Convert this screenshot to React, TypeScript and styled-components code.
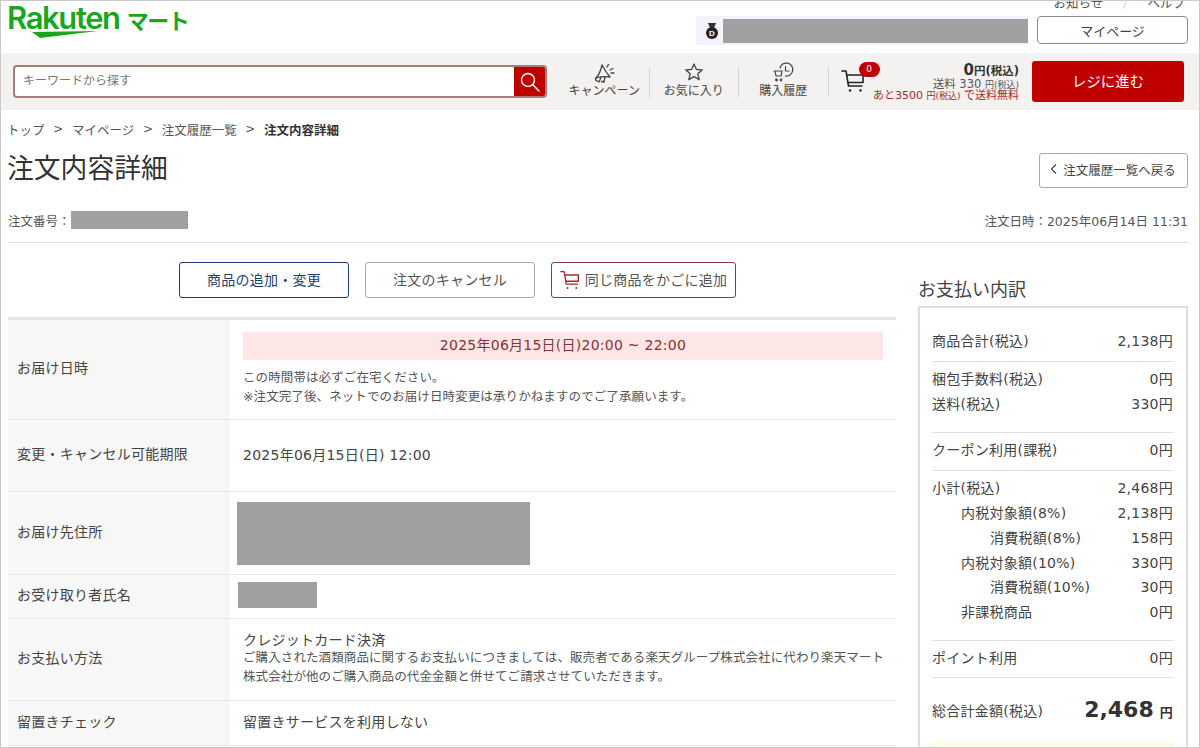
import React from "react";
import styled, { createGlobalStyle } from "styled-components";

const GlobalStyle = createGlobalStyle`
	html, body {
		margin: 0;
		padding: 0;
		background: #ffffff;
	}
	* {
		box-sizing: border-box;
	}
`;

const Frame = styled.div`
	width: 1200px;
	height: 748px;
	border: 1px solid #c9c9c9;
	overflow: hidden;
	background: #ffffff;
	color: #333333;
	font-family: "DejaVu Sans", "Noto Sans CJK JP", sans-serif;
	font-size: 14px;
`;

const TopBar = styled.header`
	height: 52px;
	display: flex;
	justify-content: space-between;
	padding-left: 6px;
	overflow: hidden;
`;

const Logo = styled.div`
	position: relative;
	display: flex;
	align-items: baseline;
	height: 36px;
	color: #1ba61f;
	line-height: 33px;
`;

const LogoWord = styled.span`
	font-family: "Inter", sans-serif;
	font-size: 31px;
	font-weight: 600;
	letter-spacing: -1.4px;
`;

const LogoKana = styled.span`
	font-family: "Noto Sans CJK JP", sans-serif;
	font-size: 22px;
	font-weight: 700;
	margin-left: 7px;
	letter-spacing: -1.5px;
`;

const LogoSwoosh = styled.svg`
	position: absolute;
	left: 25px;
	top: 30px;
`;

const UserArea = styled.div`
	display: flex;
	flex-direction: column;
	align-items: flex-end;
	padding-right: 11px;
	margin-top: -8px;
`;

const TopLinks = styled.div`
	display: flex;
	align-items: center;
	height: 23px;
	padding: 0 3px 5px 0;
	font-size: 12.5px;
	color: #555555;
	gap: 20px;
`;

const LinkSlash = styled.span`
	color: #d8d8d8;
`;

const UserRow = styled.div`
	display: flex;
	align-items: flex-start;
`;

const UserStrip = styled.div`
	display: flex;
	align-items: center;
	width: 332px;
	height: 29px;
	background: #f6f2fb;
	padding-left: 9px;
	gap: 4px;
	margin-right: 9px;
`;

const Redacted = styled.div<{ $w: number; $h: number; $ml?: number; $mt?: number }>`
	width: ${(p) => p.$w}px;
	height: ${(p) => p.$h}px;
	margin-left: ${(p) => p.$ml || 0}px;
	margin-top: ${(p) => p.$mt || 0}px;
	background: #a0a0a0;
	flex: none;
`;

const MyPageButton = styled.div`
	width: 151px;
	height: 28px;
	border: 1px solid #8c8c8c;
	border-radius: 4px;
	display: flex;
	align-items: center;
	justify-content: center;
	font-size: 13px;
	color: #444444;
`;

const ToolBar = styled.div`
	height: 57px;
	background: #f4f2f0;
	display: flex;
	align-items: center;
	padding-left: 12px;
	padding-right: 15px;
`;

const SearchBox = styled.div`
	width: 534px;
	height: 33px;
	display: flex;
	border: 2px solid #a87c7c;
	border-radius: 4px;
	background: #ffffff;
	overflow: hidden;
`;

const SearchInput = styled.div`
	flex: 1;
	padding-left: 8px;
	font-size: 12px;
	line-height: 28px;
	color: #777777;
`;

const SearchButton = styled.div`
	width: 31px;
	background: #bf0000;
	display: flex;
	align-items: center;
	justify-content: center;
`;

const NavList = styled.nav`
	display: flex;
	margin-left: 13px;
`;

const NavItem = styled.div`
	width: 89.5px;
	height: 30px;
	position: relative;
	display: flex;
	flex-direction: column;
	align-items: center;
	justify-content: flex-end;
	border-right: 1px solid #d5d3d1;
	font-size: 12px;
	line-height: 11px;
	color: #444444;
	white-space: nowrap;
`;

const NavIcon = styled.svg`
	position: absolute;
	left: 50%;
	top: -5px;
	transform: translateX(-50%);
`;

const CartArea = styled.div`
	position: relative;
	flex: 1;
	display: flex;
	justify-content: flex-end;
	padding-right: 13px;
	height: 100%;
	align-items: center;
`;

const CartIcon = styled.div`
	position: absolute;
	left: 12px;
	top: 16px;
	line-height: 0;
`;

const CartBadge = styled.div`
	position: absolute;
	left: 30px;
	top: 9px;
	width: 21px;
	height: 15px;
	border-radius: 8px;
	background: #bf0000;
	color: #ffffff;
	font-size: 9px;
	line-height: 15px;
	text-align: center;
`;

const CartSummary = styled.div`
	display: flex;
	flex-direction: column;
	align-items: flex-end;
	white-space: nowrap;
	font-size: 11.5px;
	line-height: 12px;
	margin-top: 2px;
	color: #555555;
`;

const CartTotal = styled.div`
	font-weight: 700;
	font-size: 11.5px;
	line-height: 14px;
	color: #333333;
`;

const CartTotalNum = styled.span`
	font-size: 15px;
`;

const Tiny = styled.span`
	font-size: 9px;
`;

const FreeShip = styled.div`
	color: #a52a2a;
	font-size: 11px;
	margin-top: -1px;
`;

const CheckoutButton = styled.div`
	width: 152px;
	height: 41px;
	padding-bottom: 3px;
	background: #bf0000;
	border-radius: 3px;
	color: #ffffff;
	display: flex;
	align-items: center;
	justify-content: center;
	font-size: 14.4px;
`;

const Content = styled.main`
	padding: 0 11px 0 7px;
	letter-spacing: 0.25px;
`;

const Breadcrumb = styled.div`
	display: flex;
	align-items: center;
	height: 40px;
	margin-left: -1px;
	padding-bottom: 2px;
	font-size: 12.5px;
	letter-spacing: 0;
	color: #555555;
	gap: 8.7px;
`;

const CrumbArrow = styled.span`
	font-size: 12px;
`;

const Current = styled.span`
	font-weight: 700;
	color: #333333;
`;

const TitleRow = styled.div`
	display: flex;
	justify-content: space-between;
	align-items: center;
	height: 35px;
	margin-top: 3px;
`;

const Title = styled.h1`
	margin: 0 0 0 -1px;
	padding-bottom: 3px;
	font-size: 26.8px;
	font-weight: 400;
	line-height: 36px;
	letter-spacing: 0;
	color: #333333;
`;

const BackButton = styled.div`
	width: 149px;
	height: 35px;
	padding: 0 2px 3px 0;
	border: 1px solid #aaaaaa;
	border-radius: 3px;
	display: flex;
	align-items: center;
	justify-content: center;
	gap: 4px;
	font-size: 12.5px;
	letter-spacing: 0;
	color: #444444;
`;

const OrderRow = styled.div`
	display: flex;
	justify-content: space-between;
	align-items: center;
	height: 55px;
	padding-top: 10px;
	border-bottom: 1px solid #dddddd;
	font-size: 12.5px;
	letter-spacing: 0;
	color: #555555;
`;

const OrderNo = styled.div`
	display: flex;
	align-items: center;
`;

const Columns = styled.div`
	display: grid;
	grid-template-columns: 888px 270px;
	column-gap: 22px;
`;

const Actions = styled.div`
	display: flex;
	gap: 16px;
	padding: 19px 0 19px 171px;
`;

const ActionButton = styled.div<{ $color: string; $text: string; $w: number }>`
	width: ${(p) => p.$w}px;
	height: 36px;
	padding-bottom: 3px;
	border: 1px solid ${(p) => p.$color};
	border-radius: 3px;
	display: flex;
	align-items: center;
	justify-content: center;
	gap: 5px;
	font-size: 14px;
	color: ${(p) => p.$text};
`;

const ActionIcon = styled.span`
	line-height: 0;
	margin-top: 3px;
`;

const Table = styled.div`
	border-top: 3px solid #e6e6e6;
`;

const Row = styled.div<{ $h: number }>`
	display: grid;
	grid-template-columns: 222px 1fr;
	min-height: ${(p) => p.$h}px;
	border-bottom: 1px solid #e8e8e8;
`;

const Label = styled.div`
	background: #f7f7f7;
	padding: 0 0 5px 9px;
	display: flex;
	align-items: center;
	color: #444444;
`;

const Value = styled.div<{ $top?: boolean }>`
	padding: ${(p) => (p.$top ? "12px 13px 0" : "0 13px 4px")};
	display: flex;
	flex-direction: column;
	justify-content: ${(p) => (p.$top ? "flex-start" : "center")};
	color: #444444;
`;

const DeliveryBanner = styled.div`
	height: 28px;
	background: #fde6e6;
	color: #8c3030;
	line-height: 27px;
	text-align: center;
	margin-bottom: 9px;
`;

const Note = styled.div`
	font-size: 12.5px;
	line-height: 18.5px;
	letter-spacing: 0.1px;
	white-space: nowrap;
	color: #555555;
`;

const Side = styled.aside`
	padding-top: 35px;
`;

const SideTitle = styled.h2`
	margin: 0 0 4px;
	font-size: 18px;
	font-weight: 400;
	line-height: 24px;
	letter-spacing: 0;
	color: #444444;
`;

const SideBox = styled.div`
	height: 500px;
	border: 2px solid #dddddd;
	border-bottom: none;
	padding: 21px 12px 0;
`;

const Group = styled.div<{ $pb: number; $first?: boolean }>`
	padding-top: ${(p) => (p.$first ? 0 : 5)}px;
	padding-bottom: ${(p) => p.$pb}px;
	border-bottom: 1px solid #e2e2e2;
`;

const SideRow = styled.div<{ $indent?: number }>`
	display: flex;
	justify-content: space-between;
	line-height: 24.8px;
	padding-left: ${(p) => p.$indent || 0}px;
	padding-right: 1px;
	color: #444444;
	white-space: nowrap;
`;

const TotalRow = styled.div`
	display: flex;
	justify-content: space-between;
	align-items: center;
	height: 42px;
	margin-top: 11px;
	color: #444444;
`;

const TotalAmount = styled.div`
	display: flex;
	align-items: baseline;
	gap: 6px;
	font-weight: 700;
	font-size: 13px;
	padding-right: 1px;
	color: #333333;
`;

const TotalNumber = styled.span`
	font-size: 22px;
	letter-spacing: 0;
`;

const PointBox = styled.div`
	height: 30px;
	margin-top: 10px;
	background: #fffbe8;
`;

const sideGroups = [
	{ pb: 7, first: true, rows: [["商品合計(税込)", "2,138円"]] },
	{
		pb: 16,
		rows: [
			["梱包手数料(税込)", "0円"],
			["送料(税込)", "330円"],
		],
	},
	{ pb: 7, rows: [["クーポン利用(課税)", "0円"]] },
	{
		pb: 15,
		rows: [
			["小計(税込)", "2,468円", 0],
			["内税対象額(8%)", "2,138円", 29],
			["消費税額(8%)", "158円", 58],
			["内税対象額(10%)", "330円", 29],
			["消費税額(10%)", "30円", 58],
			["非課税商品", "0円", 29],
		],
	},
	{ pb: 6, rows: [["ポイント利用", "0円"]] },
];

const MegaphoneIcon = () => (
	<NavIcon width="24" height="24" viewBox="0 0 24 24" fill="none" stroke="#444" strokeWidth="1.3" strokeLinejoin="round" strokeLinecap="round">
		<path d="M4 16 Q8 12 10 3 Q13 9 18 15 Q11 14 4 16 Z" />
		<path d="M4 16 L3.5 18 L7 20 L9 15.5" />
		<path d="M9.5 19.5 L12 20 L13 15" />
		<path d="M15 5 L16.5 2.5 M18 8 L21 6.5 M19 11 L22 11" />
	</NavIcon>
);

const StarIcon = () => (
	<NavIcon width="20" height="20" viewBox="0 0 20 20" fill="none" stroke="#444" strokeWidth="1.3" strokeLinejoin="round">
		<path d="M10 2 L12.4 7.4 L18.2 8 L13.8 11.8 L15.2 17.6 L10 14.6 L4.8 17.6 L6.2 11.8 L1.8 8 L7.6 7.4 Z" />
	</NavIcon>
);

const HistoryIcon = () => (
	<NavIcon width="22" height="22" viewBox="0 0 22 22" fill="none" stroke="#444" strokeWidth="1.2" strokeLinecap="round" strokeLinejoin="round">
		<path d="M8 6 A6.5 6.5 0 1 1 13.5 14" />
		<path d="M13.5 4.5 V9 H17" />
		<path d="M2 9 H10 L9 14 H4 L3 9" />
		<circle cx="4.5" cy="18" r="0.8" fill="#444" />
		<circle cx="9" cy="18" r="0.8" fill="#444" />
	</NavIcon>
);

const CartGlyph = ({ color, size }: { color: string; size: number }) => (
	<svg width={size} height={size} viewBox="0 0 24 24" fill="none" stroke={color} strokeWidth="1.6" strokeLinecap="round" strokeLinejoin="round">
		<path d="M1 2 H5 L7.5 17 H21" />
		<path d="M5.8 6 H22 V13.5 H7" />
		<circle cx="9" cy="21.5" r="1.2" fill={color} stroke="none" />
		<circle cx="19.5" cy="21.5" r="1.2" fill={color} stroke="none" />
	</svg>
);

export default function App() {
	return (
		<>
			<GlobalStyle />
			<Frame>
				<TopBar>
					<Logo>
						<LogoWord>Rakuten</LogoWord>
						<LogoKana>マート</LogoKana>
						<LogoSwoosh width="70" height="8" viewBox="0 0 70 8">
							<path d="M0 1 L66 0 L8 7 Z" fill="#1ba61f" />
						</LogoSwoosh>
					</Logo>
					<UserArea>
						<TopLinks>
							<span>お知らせ</span>
							<LinkSlash>/</LinkSlash>
							<span>ヘルプ</span>
						</TopLinks>
						<UserRow>
							<UserStrip>
								<svg width="14" height="18" viewBox="0 0 14 18">
									<path d="M3 1 H11 L9 6 H5 Z" fill="#333" />
									<circle cx="7" cy="11" r="6" fill="#222" />
									<text x="7" y="14" fontSize="8" fontWeight="700" fill="#fff" textAnchor="middle" fontFamily="Liberation Sans, sans-serif">D</text>
								</svg>
								<Redacted $w={305} $h={24} />
							</UserStrip>
							<MyPageButton>マイページ</MyPageButton>
						</UserRow>
					</UserArea>
				</TopBar>

				<ToolBar>
					<SearchBox>
						<SearchInput>キーワードから探す</SearchInput>
						<SearchButton>
							<svg width="22" height="22" viewBox="0 0 22 22" fill="none" stroke="#fff" strokeWidth="1.4" strokeLinecap="round">
								<circle cx="9" cy="9" r="6.5" />
								<path d="M13.8 13.8 L20 20" />
							</svg>
						</SearchButton>
					</SearchBox>
					<NavList>
						<NavItem>
							<MegaphoneIcon />
							キャンペーン
						</NavItem>
						<NavItem>
							<StarIcon />
							お気に入り
						</NavItem>
						<NavItem>
							<HistoryIcon />
							購入履歴
						</NavItem>
					</NavList>
					<CartArea>
						<CartIcon>
							<CartGlyph color="#222222" size={24} />
						</CartIcon>
						<CartBadge>0</CartBadge>
						<CartSummary>
							<CartTotal>
								<CartTotalNum>0</CartTotalNum>円(税込)
							</CartTotal>
							<div>
								送料 330 <Tiny>円(税込)</Tiny>
							</div>
							<FreeShip>
								あと3500 <Tiny>円(税込)</Tiny> で送料無料
							</FreeShip>
						</CartSummary>
					</CartArea>
					<CheckoutButton>レジに進む</CheckoutButton>
				</ToolBar>

				<Content>
					<Breadcrumb>
						<span>トップ</span>
						<CrumbArrow>&gt;</CrumbArrow>
						<span>マイページ</span>
						<CrumbArrow>&gt;</CrumbArrow>
						<span>注文履歴一覧</span>
						<CrumbArrow>&gt;</CrumbArrow>
						<Current>注文内容詳細</Current>
					</Breadcrumb>

					<TitleRow>
						<Title>注文内容詳細</Title>
						<BackButton>
							<svg width="10" height="12" viewBox="0 0 10 12" fill="none" stroke="#444" strokeWidth="1.2">
								<path d="M7 1.5 L2.5 6 L7 10.5" />
							</svg>
							注文履歴一覧へ戻る
						</BackButton>
					</TitleRow>

					<OrderRow>
						<OrderNo>
							注文番号：
							<Redacted $w={117} $h={18} />
						</OrderNo>
						<div>注文日時：2025年06月14日 11:31</div>
					</OrderRow>

					<Columns>
						<div>
							<Actions>
								<ActionButton $color="#1d3f72" $text="#1d3f72" $w={170}>商品の追加・変更</ActionButton>
								<ActionButton $color="#aaaaaa" $text="#555555" $w={170}>注文のキャンセル</ActionButton>
								<ActionButton $color="#8c3a3a" $text="#555555" $w={185}>
									<ActionIcon>
										<CartGlyph color="#a52a2a" size={20} />
									</ActionIcon>
									同じ商品をかごに追加
								</ActionButton>
							</Actions>

							<Table>
								<Row $h={100}>
									<Label>お届け日時</Label>
									<Value $top>
										<DeliveryBanner>2025年06月15日(日)20:00 ~ 22:00</DeliveryBanner>
										<Note>この時間帯は必ずご在宅ください。</Note>
										<Note>※注文完了後、ネットでのお届け日時変更は承りかねますのでご了承願います。</Note>
									</Value>
								</Row>
								<Row $h={72}>
									<Label>変更・キャンセル可能期限</Label>
									<Value>2025年06月15日(日) 12:00</Value>
								</Row>
								<Row $h={83}>
									<Label>お届け先住所</Label>
									<Value>
										<Redacted $w={293} $h={63} $ml={-6} $mt={4} />
									</Value>
								</Row>
								<Row $h={44}>
									<Label>お受け取り者氏名</Label>
									<Value>
										<Redacted $w={79} $h={26} $ml={-5} />
									</Value>
								</Row>
								<Row $h={82}>
									<Label>お支払い方法</Label>
									<Value>
										<div>クレジットカード決済</div>
										<Note>ご購入された酒類商品に関するお支払いにつきましては、販売者である楽天グループ株式会社に代わり楽天マート</Note>
										<Note>株式会社が他のご購入商品の代金金額と併せてご請求させていただきます。</Note>
									</Value>
								</Row>
								<Row $h={45}>
									<Label>留置きチェック</Label>
									<Value>留置きサービスを利用しない</Value>
								</Row>
							</Table>
						</div>

						<Side>
							<SideTitle>お支払い内訳</SideTitle>
							<SideBox>
								{sideGroups.map((group, i) => (
									<Group key={i} $pb={group.pb} $first={group.first}>
										{group.rows.map((row) => (
											<SideRow key={row[0] as string} $indent={row[2] as number}>
												<span>{row[0]}</span>
												<span>{row[1]}</span>
											</SideRow>
										))}
									</Group>
								))}
								<TotalRow>
									<span>総合計金額(税込)</span>
									<TotalAmount>
										<TotalNumber>2,468</TotalNumber>円
									</TotalAmount>
								</TotalRow>
								<PointBox />
							</SideBox>
						</Side>
					</Columns>
				</Content>
			</Frame>
		</>
	);
}
